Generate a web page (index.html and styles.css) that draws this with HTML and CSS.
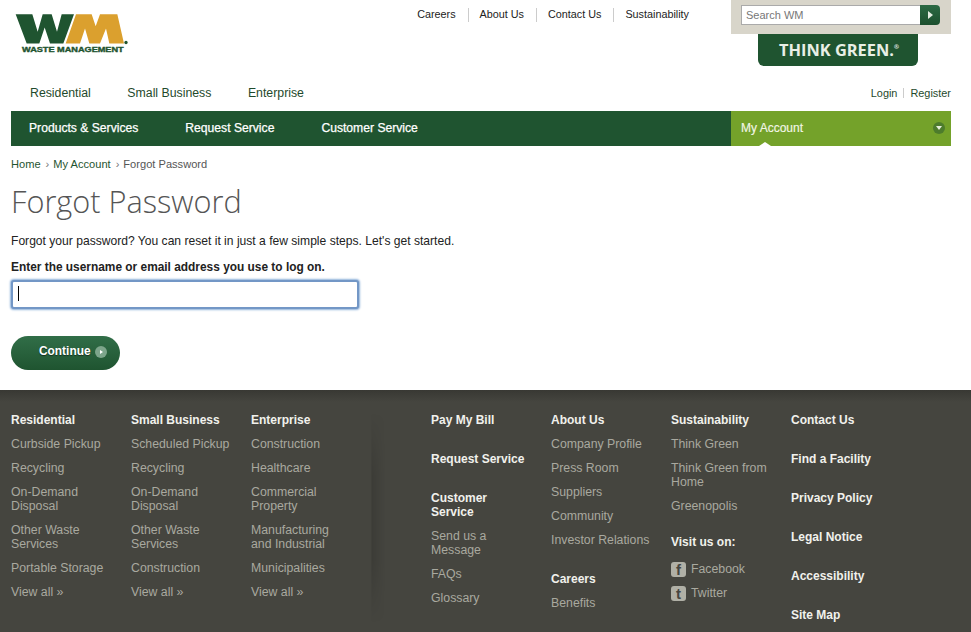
FILE: index.html
```html
<!DOCTYPE html>
<html lang="en">
<head>
    <meta charset="UTF-8">
    <meta name="viewport" content="width=device-width, initial-scale=1.0">
    <title>Forgot Password</title>
    <link rel="stylesheet" href="styles.css">
</head>
<body>

<div class="page">
    <header class="top">
        <svg class="logo" viewBox="33 30 360 140" width="120" height="47">
            <polygon fill="#1f5430" points="47,42 97,42 113,95 128,42 155,42 171,95 185,42 222,42 190,130 150,130 134,82 118,130 80,130"/>
            <polygon fill="#dba02e" points="197,130 228,42 275,42 287,78 300,42 352,42 372,130 328,130 318,85 300,130 268,130 255,85 240,130"/>
            <circle cx="378" cy="127" r="5" fill="#1f5430"/>
            <text x="66" y="157" textLength="305" lengthAdjust="spacingAndGlyphs" class="logo-text">WASTE MANAGEMENT</text>
        </svg>
        <div class="top-right">
            <ul class="top-links">
                <li><a href="#">Careers</a></li>
                <li><a href="#">About Us</a></li>
                <li><a href="#">Contact Us</a></li>
                <li><a href="#">Sustainability</a></li>
            </ul>
            <div class="search-col">
                <div class="search-box">
                    <input class="search-input" type="text" placeholder="Search WM">
                    <button class="search-btn"><span class="tri-right"></span></button>
                </div>
                <div class="think-green">THINK GREEN.<sup>®</sup></div>
            </div>
        </div>
    </header>

    <div class="subnav">
        <div class="subnav-left">
            <a href="#">Residential</a>
            <a href="#">Small Business</a>
            <a href="#">Enterprise</a>
        </div>
        <div class="login">
            <a href="#">Login</a><span class="login-sep"></span><a href="#">Register</a>
        </div>
    </div>

    <nav class="mainnav">
        <div class="mainnav-links">
            <a href="#">Products &amp; Services</a>
            <a href="#">Request Service</a>
            <a href="#">Customer Service</a>
        </div>
        <div class="account">
            My Account
            <span class="account-icon"><span class="tri-down"></span></span>
        </div>
    </nav>

    <div class="crumbs">
        <a href="#">Home</a><span class="crumb-sep">›</span><a href="#">My Account</a><span class="crumb-sep">›</span>Forgot Password
    </div>

    <h1>Forgot Password</h1>
    <p class="intro">Forgot your password? You can reset it in just a few simple steps. Let's get started.</p>
    <label class="field-label" for="username">Enter the username or email address you use to log on.</label>
    <div class="field">
        <input id="username" type="text">
        <span class="caret"></span>
    </div>
    <button class="continue">Continue <span class="continue-icon"><span class="tri-small"></span></span></button>
</div>

<footer class="footer">
    <div class="col">
        <h4>Residential</h4>
        <a href="#">Curbside Pickup</a>
        <a href="#">Recycling</a>
        <a href="#">On-Demand Disposal</a>
        <a href="#">Other Waste Services</a>
        <a href="#">Portable Storage</a>
        <a href="#">View all »</a>
    </div>
    <div class="col">
        <h4>Small Business</h4>
        <a href="#">Scheduled Pickup</a>
        <a href="#">Recycling</a>
        <a href="#">On-Demand Disposal</a>
        <a href="#">Other Waste Services</a>
        <a href="#">Construction</a>
        <a href="#">View all »</a>
    </div>
    <div class="col">
        <h4>Enterprise</h4>
        <a href="#">Construction</a>
        <a href="#">Healthcare</a>
        <a href="#">Commercial Property</a>
        <a href="#">Manufacturing and Industrial</a>
        <a href="#">Municipalities</a>
        <a href="#">View all »</a>
    </div>
    <div class="col-gap"></div>
    <div class="col">
        <h4 class="solo">Pay My Bill</h4>
        <h4 class="solo">Request Service</h4>
        <h4>Customer Service</h4>
        <a href="#">Send us a Message</a>
        <a href="#">FAQs</a>
        <a href="#">Glossary</a>
    </div>
    <div class="col">
        <h4>About Us</h4>
        <a href="#">Company Profile</a>
        <a href="#">Press Room</a>
        <a href="#">Suppliers</a>
        <a href="#">Community</a>
        <a href="#">Investor Relations</a>
        <h4 class="after-list">Careers</h4>
        <a href="#">Benefits</a>
    </div>
    <div class="col">
        <h4>Sustainability</h4>
        <a href="#">Think Green</a>
        <a href="#">Think Green from Home</a>
        <a href="#">Greenopolis</a>
        <h4 class="visit">Visit us on:</h4>
        <a class="social" href="#"><span class="social-icon">f</span>Facebook</a>
        <a class="social" href="#"><span class="social-icon">t</span>Twitter</a>
    </div>
    <div class="col">
        <h4 class="solo">Contact Us</h4>
        <h4 class="solo">Find a Facility</h4>
        <h4 class="solo">Privacy Policy</h4>
        <h4 class="solo">Legal Notice</h4>
        <h4 class="solo">Accessibility</h4>
        <h4 class="solo">Site Map</h4>
    </div>
</footer>

</body>
</html>
```

FILE: styles.css
```css
* {
    box-sizing: border-box;
}
html, body {
    height: 100%;
}
body {
    margin: 0;
    font-family: "Liberation Sans", Arial, sans-serif;
    font-size: 12px;
    color: #222;
    background-color: white;
    overflow: hidden;
}
a {
    color: inherit;
    text-decoration: none;
}
.page {
    height: 390px;
    padding: 0 20px 0 11px;
}

/* header */
.top {
    display: flex;
    justify-content: space-between;
    height: 78px;
}
.logo {
    display: block;
    margin-top: 10px;
}
.logo-text {
    font-family: "Liberation Sans", Arial, sans-serif;
    font-weight: bold;
    font-size: 19px;
    fill: #1f5430;
    stroke: #1f5430;
    stroke-width: 1px;
}
.top-right {
    display: flex;
}
.top-links {
    display: flex;
    list-style: none;
    margin: 8px 42px 0 0;
    padding: 0;
    height: 14px;
    font-size: 10.8px;
    line-height: 13px;
    color: #222;
}
.top-links li {
    padding: 0 12px 0 11px;
    border-right: 1px solid #ccc;
}
.top-links li:last-child {
    padding-right: 0;
    border-right: none;
}
.search-col {
    width: 220px;
    display: flex;
    flex-direction: column;
    align-items: center;
}
.search-box {
    width: 220px;
    height: 34px;
    background-color: #d8d5ca;
    padding: 5px 11px 9px 10px;
    display: flex;
}
.search-input {
    flex: 1;
    min-width: 0;
    height: 20px;
    border: 1px solid #aaa;
    border-right: none;
    padding: 0 4px;
    font-family: inherit;
    font-size: 11px;
    background-color: white;
    outline: none;
}
.search-input::placeholder {
    color: #777;
    opacity: 1;
}
.search-btn {
    width: 20px;
    height: 20px;
    border: none;
    padding: 0;
    border-radius: 0 4px 4px 0;
    background: linear-gradient(#2c6a44, #1c4f2e);
    display: flex;
    align-items: center;
    justify-content: center;
}
.tri-right {
    border-left: 5px solid #e4ece2;
    border-top: 4px solid transparent;
    border-bottom: 4px solid transparent;
}
.think-green {
    width: 160px;
    height: 32px;
    margin-right: 6px;
    padding-left: 2px;
    background-color: #1f5430;
    border-radius: 0 0 6px 6px;
    color: #e9efe6;
    font-family: "Open Sans", sans-serif;
    font-weight: 700;
    font-size: 16.4px;
    line-height: 31px;
    text-align: center;
}
.think-green sup {
    font-size: 6px;
    line-height: 0;
    vertical-align: 7px;
}

/* navigation */
.subnav {
    height: 33px;
    display: flex;
    justify-content: space-between;
    align-items: center;
    padding: 0 0 3px 19px;
    color: #1f4a2c;
}
.subnav-left {
    display: flex;
    gap: 36.5px;
    font-size: 12.3px;
}
.login {
    display: flex;
    align-items: center;
    font-size: 10.9px;
}
.login-sep {
    width: 1px;
    height: 10px;
    margin: 0 6px;
    background-color: #ccc;
}
.mainnav {
    height: 35px;
    background-color: #1f5430;
    display: flex;
    justify-content: space-between;
    color: white;
}
.mainnav-links {
    display: flex;
    gap: 47px;
    padding-left: 18px;
    font-size: 12.15px;
    line-height: 34px;
    -webkit-text-stroke: 0.25px white;
}
.account {
    position: relative;
    width: 220px;
    background-color: #74a22a;
    padding: 0 6px 2px 10px;
    color: #f2f6e6;
    display: flex;
    justify-content: space-between;
    align-items: center;
    -webkit-text-stroke: 0.15px #f2f6e6;
}
.account::after {
    content: "";
    position: absolute;
    left: 28px;
    bottom: 0;
    border-bottom: 4px solid white;
    border-left: 6px solid transparent;
    border-right: 6px solid transparent;
}
.account-icon {
    width: 12px;
    height: 12px;
    border-radius: 50%;
    background-color: #4d7c2c;
    display: flex;
    align-items: center;
    justify-content: center;
}
.tri-down {
    border-top: 4px solid #e6eeda;
    border-left: 3px solid transparent;
    border-right: 3px solid transparent;
}

/* content */
.crumbs {
    margin-top: 12px;
    font-size: 11.1px;
    line-height: 13px;
    color: #555;
}
.crumbs a {
    color: #1f5430;
}
.crumb-sep {
    margin: 0 4px 0 5px;
    color: #777;
}
h1 {
    margin: 9px 0 0;
    font-family: "Open Sans", sans-serif;
    font-weight: 300;
    font-size: 30.7px;
    line-height: 42px;
    color: #555;
}
.intro {
    margin: 12px 0 0;
    font-size: 12.1px;
    line-height: 14px;
}
.field-label {
    display: block;
    margin-top: 12px;
    font-size: 11.9px;
    font-weight: bold;
    line-height: 14px;
}
.field {
    position: relative;
    width: 348px;
    height: 29px;
    margin-top: 6px;
}
.field input {
    display: block;
    width: 100%;
    height: 100%;
    border: 2px solid #7397c6;
    border-radius: 3px;
    box-shadow: 0 0 2px 1px #8fb2da;
    background-color: white;
    outline: none;
}
.caret {
    position: absolute;
    left: 7px;
    top: 6px;
    width: 1px;
    height: 15px;
    background-color: black;
}
.continue {
    display: flex;
    align-items: center;
    width: 109px;
    height: 34px;
    margin-top: 27px;
    padding: 0 0 5px 28px;
    border: none;
    border-radius: 17px;
    background: linear-gradient(#316e48, #1f5430);
    color: white;
    font-family: inherit;
    font-size: 11.9px;
    font-weight: bold;
    text-shadow: 0 1px 1px rgba(0,0,0,0.5);
}
.continue-icon {
    width: 12px;
    height: 12px;
    margin: 3px 0 0 4px;
    border-radius: 50%;
    background-color: #7da58b;
    display: flex;
    align-items: center;
    justify-content: center;
}
.tri-small {
    border-left: 3px solid white;
    border-top: 2px solid transparent;
    border-bottom: 2px solid transparent;
    margin-left: 1px;
}

/* footer */
.footer {
    height: 242px;
    padding: 23px 0 0 11px;
    display: grid;
    grid-template-columns: repeat(3, 120px) 60px repeat(4, 120px);
    align-items: start;
    overflow: hidden;
    background: linear-gradient(#383833, #45453f 12px);
    color: #a9a99f;
    font-size: 12.3px;
    line-height: 14px;
}
.col {
    display: flex;
    flex-direction: column;
    gap: 10px;
    width: 100px;
}
.col-gap {
    height: 210px;
    background: linear-gradient(to right, rgba(0,0,0,0.02), rgba(0,0,0,0.12) 1px, transparent 14px);
    -webkit-mask-image: linear-gradient(transparent, black 30%, black 70%, transparent);
}
.col h4 {
    margin: 0;
    font-size: 12px;
    line-height: 14px;
    font-weight: bold;
    color: #f1f1ec;
}
.col h4.solo {
    margin-bottom: 15px;
}
.col h4.after-list {
    margin-top: 15px;
}
.col h4.visit {
    margin-top: 12px;
    margin-bottom: 3px;
}
.social {
    display: flex;
    align-items: center;
    gap: 5px;
    height: 14px;
}
.social-icon {
    flex: none;
    width: 15px;
    height: 15px;
    border-radius: 3px;
    background-color: #b0b0a6;
    color: #45453f;
    font-weight: bold;
    font-size: 15px;
    line-height: 16px;
    text-align: center;
    overflow: hidden;
}
```
